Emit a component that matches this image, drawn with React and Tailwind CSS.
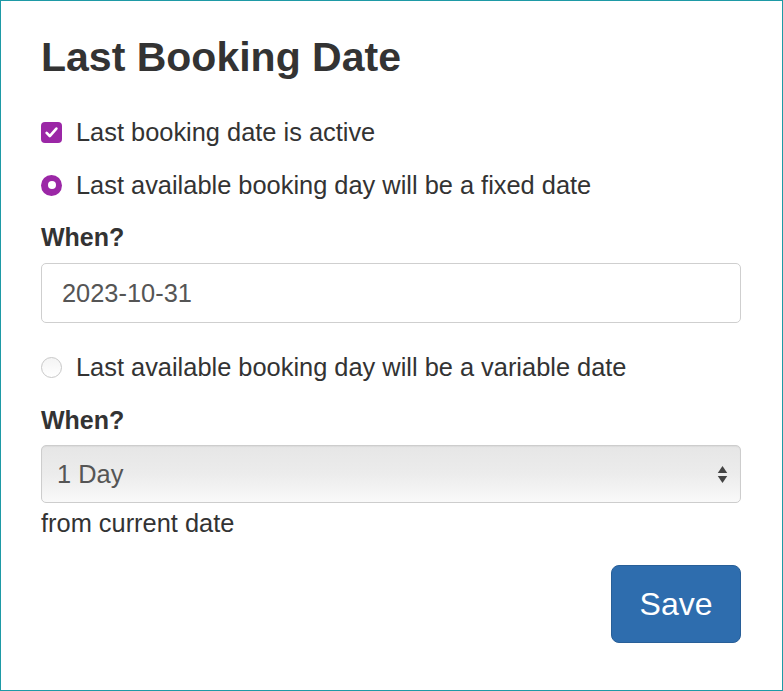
import React, { useState } from 'react';

const Radio = ({ checked }) => (
  <span
    className={
      checked
        ? 'w-[21px] h-[21px] rounded-full bg-[#9b27a6] flex items-center justify-center shrink-0'
        : 'w-[21px] h-[21px] rounded-full border border-[#c8c8c8] bg-gradient-to-b from-[#f4f4f4] to-white shrink-0'
    }
  >
    {checked && <span className="w-[8px] h-[8px] rounded-full bg-white" />}
  </span>
);

export default function App() {
  const [active] = useState(true);

  return (
    <div
      className="w-[783px] h-[691px] border border-[#1e9aa6] bg-white text-[#333] px-[40px] pt-[32px]"
      style={{ fontFamily: '"Liberation Sans", Arial, sans-serif' }}
    >
      <h1 className="text-[41px] font-bold leading-[48px]">Last Booking Date</h1>

      <div className="mt-[40px] flex items-center gap-[14px] h-[22px]">
        <span className="w-[21px] h-[21px] rounded-[4px] bg-[#9b27a6] flex items-center justify-center shrink-0">
          {active && (
            <svg width="17" height="17" viewBox="0 0 14 14" fill="none">
              <path d="M3 7.3l2.6 2.6L11 3.8" stroke="white" strokeWidth="2.2" strokeLinecap="round" strokeLinejoin="round" />
            </svg>
          )}
        </span>
        <span className="text-[25.4px]">Last booking date is active</span>
      </div>

      <div className="mt-[31px] flex items-center gap-[14px] h-[22px]">
        <Radio checked />
        <span className="text-[25.4px]">Last available booking day will be a fixed date</span>
      </div>

      <div className="mt-[27px] text-[25px] font-bold leading-[28px]">When?</div>

      <div className="mt-[12px] h-[60px] w-[700px] rounded-[5px] border border-[#cfcfcf] flex items-center px-[20px] text-[25.4px] text-[#555]">
        2023-10-31
      </div>

      <div className="mt-[33px] flex items-center gap-[14px] h-[22px]">
        <Radio />
        <span className="text-[25.4px]">Last available booking day will be a variable date</span>
      </div>

      <div className="mt-[28px] text-[25px] font-bold leading-[28px]">When?</div>

      <div className="mt-[11px] h-[58px] w-[700px] rounded-[5px] border border-[#cdcdcd] bg-gradient-to-b from-[#e6e6e6] via-[#ececec] to-[#f9f9f9] flex items-center justify-between pl-[15px] pr-[12px] text-[25.4px] text-[#555] shadow-[inset_0_1px_1px_rgba(0,0,0,0.05)]">
        <span>1 Day</span>
        <svg width="11" height="19" viewBox="0 0 10 18">
          <path d="M5 1L9.5 7.5H0.5Z" fill="#444" />
          <path d="M5 17L9.5 10.5H0.5Z" fill="#444" />
        </svg>
      </div>

      <div className="mt-[6px] text-[25.4px] leading-[28px]">from current date</div>

      <div className="mt-[28px] flex justify-end w-[700px]">
        <button className="w-[130px] h-[78px] rounded-[8px] bg-[#2e6dae] border border-[#285f98] text-white text-[32px]">
          Save
        </button>
      </div>
    </div>
  );
}
